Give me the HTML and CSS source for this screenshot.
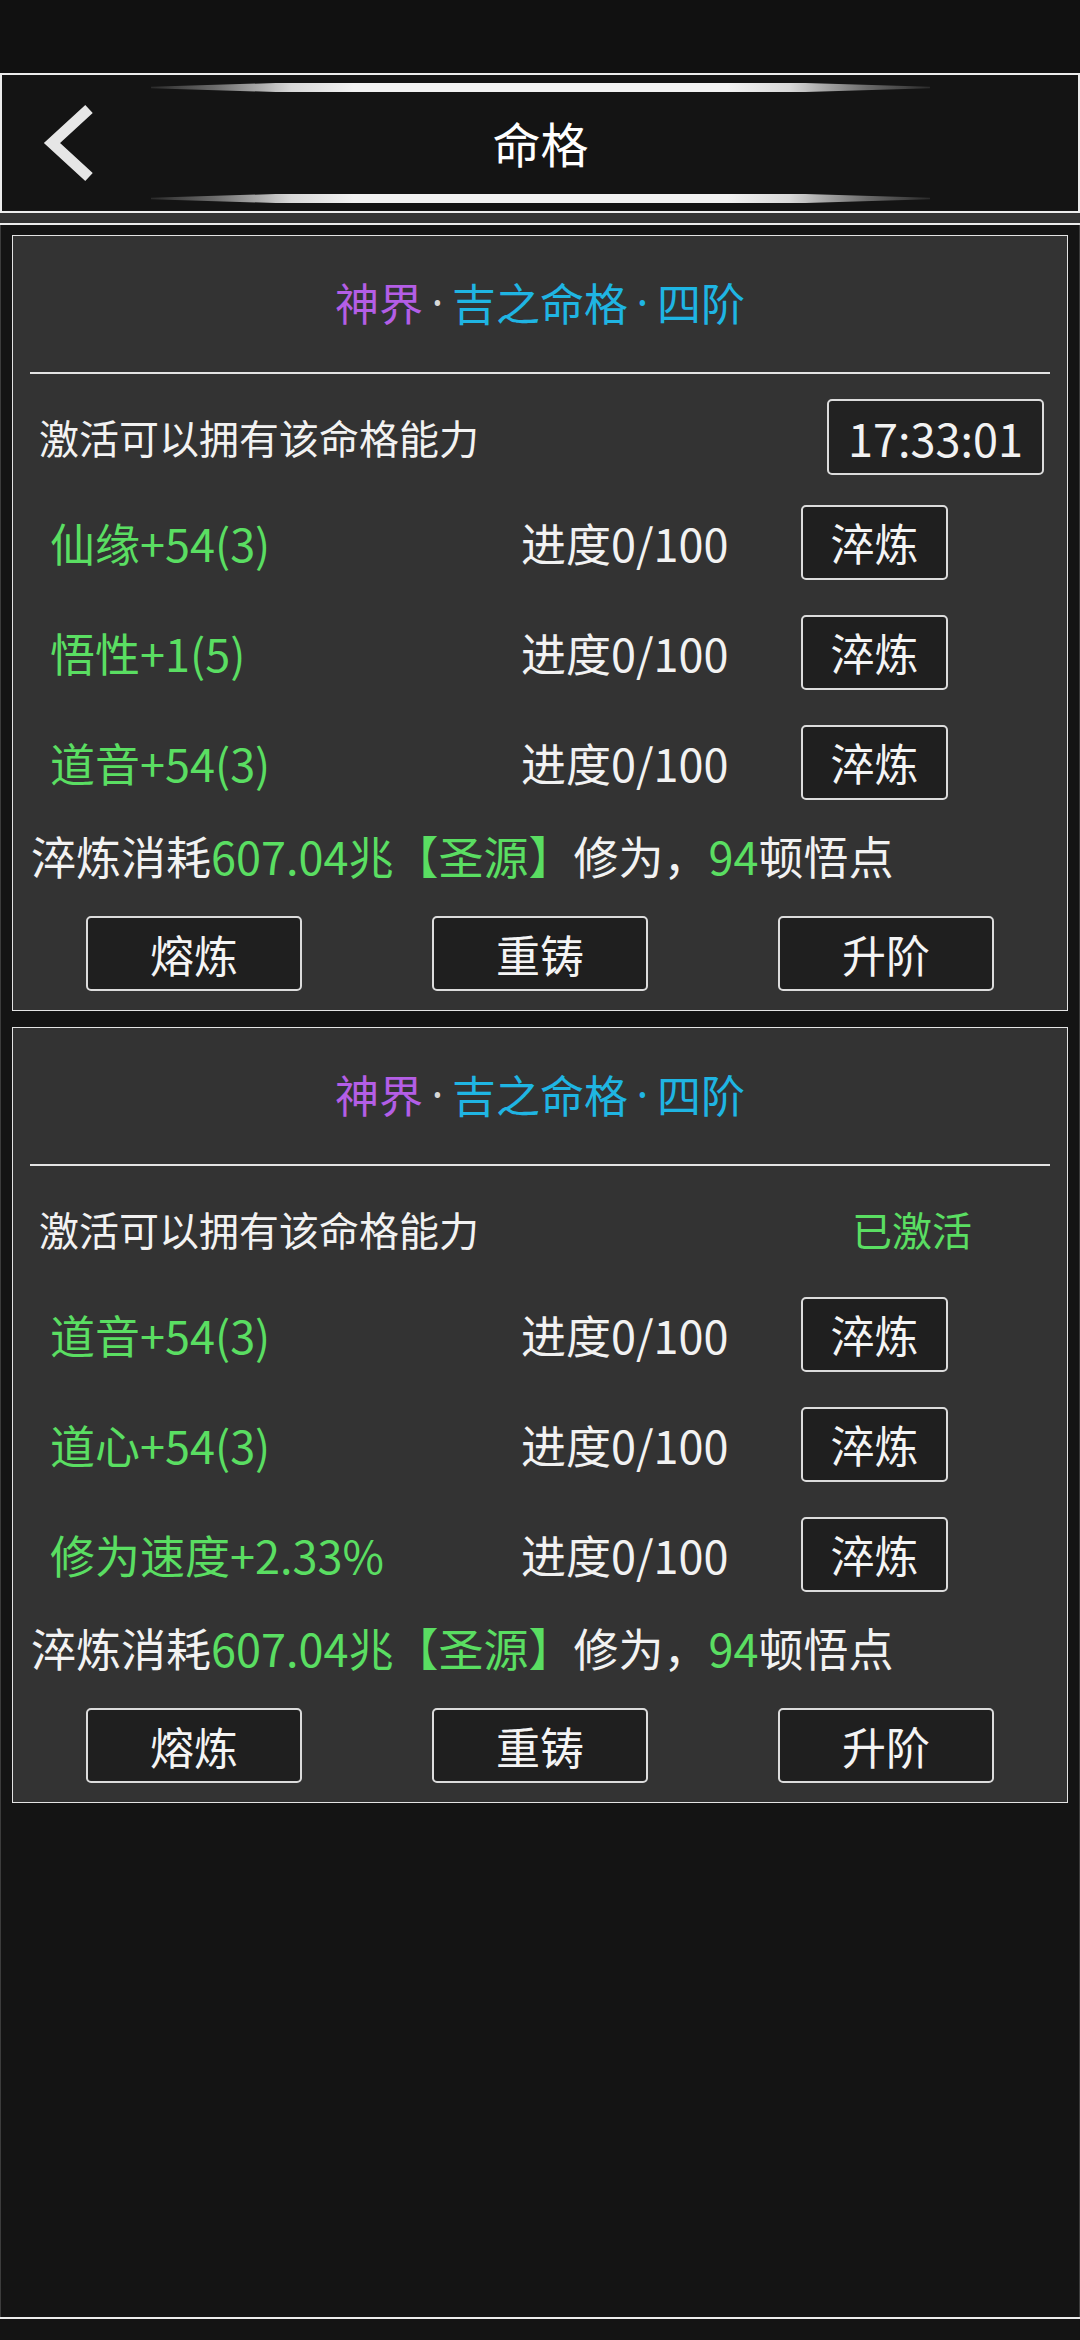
FILE: index.html
```html
<!DOCTYPE html>
<html lang="zh-CN">
<head>
<meta charset="utf-8">
<title>命格</title>
<link rel="stylesheet" href="styles.css">
</head>
<body>
<div class="status"></div>
<div class="app">
  <header class="topbar">
    <div class="back">
      <svg width="149" height="136" viewBox="0 0 149 136"><polyline points="87,34 50,68 87,102" fill="none" stroke="#e6e6e6" stroke-width="11" stroke-linejoin="miter"/></svg>
    </div>
    <div class="titlecol">
      <div class="decor"></div>
      <div class="title">命格</div>
      <div class="decor"></div>
    </div>
    <div></div>
  </header>
  <div class="subbar"></div>
  <main class="content">
    <section class="card">
      <div class="card-title"><span class="purple">神界</span><span class="dot light">·</span><span class="cyan">吉之命格</span><span class="dot cyan">·</span><span class="cyan">四阶</span></div>
      <div class="divider"></div>
      <div class="act-row">
        <span class="act-text">激活可以拥有该命格能力</span>
        <span class="timer">17:33:01</span>
      </div>
      <div class="attr-row"><span class="green">仙缘+54(3)</span><span class="prog">进度0/100</span><span class="btn small">淬炼</span></div>
      <div class="attr-row"><span class="green">悟性+1(5)</span><span class="prog">进度0/100</span><span class="btn small">淬炼</span></div>
      <div class="attr-row"><span class="green">道音+54(3)</span><span class="prog">进度0/100</span><span class="btn small">淬炼</span></div>
      <div class="cost">淬炼消耗<span class="green">607.04兆【圣源】</span>修为，<span class="green">94</span>顿悟点</div>
      <div class="actions"><span class="btn big">熔炼</span><span class="btn big">重铸</span><span class="btn big">升阶</span></div>
    </section>
    <section class="card">
      <div class="card-title"><span class="purple">神界</span><span class="dot light">·</span><span class="cyan">吉之命格</span><span class="dot cyan">·</span><span class="cyan">四阶</span></div>
      <div class="divider"></div>
      <div class="act-row">
        <span class="act-text">激活可以拥有该命格能力</span>
        <span class="activated">已激活</span>
      </div>
      <div class="attr-row"><span class="green">道音+54(3)</span><span class="prog">进度0/100</span><span class="btn small">淬炼</span></div>
      <div class="attr-row"><span class="green">道心+54(3)</span><span class="prog">进度0/100</span><span class="btn small">淬炼</span></div>
      <div class="attr-row"><span class="green">修为速度+2.33%</span><span class="prog">进度0/100</span><span class="btn small">淬炼</span></div>
      <div class="cost">淬炼消耗<span class="green">607.04兆【圣源】</span>修为，<span class="green">94</span>顿悟点</div>
      <div class="actions"><span class="btn big">熔炼</span><span class="btn big">重铸</span><span class="btn big">升阶</span></div>
    </section>
  </main>
</div>
</body>
</html>
```
FILE: styles.css
```css
* { box-sizing: border-box; }
html, body { margin: 0; padding: 0; }
body {
  background: #141414;
  color: #f2f2f2;
  font-family: "Noto Sans CJK SC", "Noto Sans", sans-serif;
  width: 1080px;
  height: 2340px;
  overflow: hidden;
}
.status { height: 73px; background: #111111; }
.app {
  border-bottom: 2px solid #ececec;
}
.topbar {
  height: 140px;
  border: 2px solid #ececec;
  background: #141414;
  display: grid;
  grid-template-columns: 149px 779px 148px;
}
.back { display: flex; align-items: center; }
.back svg { display: block; }
.titlecol {
  display: flex;
  flex-direction: column;
  padding-top: 8px;
}
.decor {
  height: 9px;
  background: linear-gradient(90deg, #2a2a2a 0%, #6a6a6a 8%, #d8d8d8 18%, #f2f2f2 26%, #f2f2f2 74%, #d8d8d8 82%, #6a6a6a 92%, #2a2a2a 100%);
  clip-path: polygon(0 42%, 16% 0, 84% 0, 100% 42%, 100% 58%, 84% 100%, 16% 100%, 0 58%);
}
.title {
  height: 102px;
  padding-bottom: 2px;
  display: flex;
  align-items: center;
  justify-content: center;
  font-size: 48px;
  color: #ffffff;
}
.subbar {
  height: 12px;
  background: #333333;
  border-bottom: 2px solid #ececec;
}
.content {
  height: 2092px;
  padding: 10px 11px 0;
  border-left: 1px solid #3c3c3c;
  border-right: 1px solid #3c3c3c;
  display: flex;
  flex-direction: column;
  gap: 16px;
}
.card {
  height: 776px;
  background: #333333;
  border: 1px solid #e4e4e4;
  display: flex;
  flex-direction: column;
}
.card-title {
  height: 136px;
  padding-bottom: 5px;
  display: flex;
  align-items: center;
  justify-content: center;
  font-size: 44px;
}
.purple { color: #b45ee6; }
.cyan { color: #1fb5e3; }
.light { color: #d8d8d8; }
.dot {
  display: inline-block;
  width: 29px;
  text-align: center;
  font-family: "Noto Sans", "DejaVu Sans", sans-serif;
}
.green { color: #5ade62; }
.divider {
  height: 2px;
  margin: 0 17px;
  background: #e4e4e4;
}
.act-row {
  margin-top: 13px;
  height: 100px;
  display: flex;
  align-items: center;
  padding-left: 26px;
  font-size: 40px;
}
.act-text { flex: 1; }
.timer {
  width: 217px;
  height: 76px;
  margin-right: 23px;
  border: 2px solid #dcdcdc;
  border-radius: 5px;
  background: #222222;
  display: flex;
  align-items: center;
  justify-content: center;
  font-size: 45px;
}
.activated {
  color: #5ade62;
  margin-right: 95px;
}
.attr-row {
  height: 110px;
  display: grid;
  grid-template-columns: 469px 282px 147px;
  align-items: center;
  padding-left: 37px;
  font-size: 45px;
}
.prog { padding-left: 2px; }
.btn {
  display: flex;
  align-items: center;
  justify-content: center;
  border: 2px solid #dcdcdc;
  border-radius: 5px;
  background: #1f1f1f;
  color: #f4f4f4;
  font-size: 44px;
}
.btn.small { width: 147px; height: 75px; }
.btn.big { width: 216px; height: 75px; }
.cost {
  height: 76px;
  display: flex;
  align-items: center;
  padding-left: 18px;
  font-size: 45px;
  white-space: nowrap;
}
.actions {
  margin-top: 23px;
  display: flex;
  justify-content: center;
  gap: 130px;
}
```
